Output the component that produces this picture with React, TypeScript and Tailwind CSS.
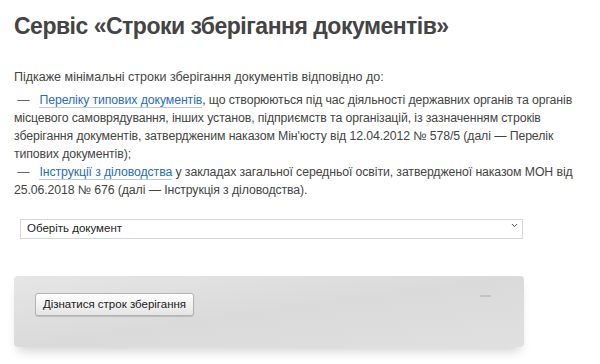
import { ChevronDown } from 'lucide-react';

export default function App() {
  const link = 'text-[#2a6db5] border-b border-[#b5cde8]';
  const dash = <span className="text-[#666]">{'\u00a0—\u00a0\u00a0 '}</span>;

  return (
    <div className="w-[600px] h-[364px] bg-white px-[14px] font-['Liberation_Sans',Arial,sans-serif] text-[#444] overflow-hidden">
      {/* Title */}
      <h1 className="pt-[11px] text-[23px] leading-[30px] font-bold text-[#444] tracking-[-0.5px]">
        Сервіс «Строки зберігання документів»
      </h1>

      <p className="mt-[27px] text-[12.5px] leading-[18px]">
        Підкаже мінімальні строки зберігання документів відповідно до:
      </p>

      <p className="mt-[5px] text-[12.3px] leading-[18px] tracking-[-0.1px] whitespace-nowrap">
        {dash}
        <a className={link}>Переліку типових документів</a>, що створюються під час діяльності державних органів та органів
        <br />
        місцевого самоврядування, інших установ, підприємств та організацій, із зазначенням строків
        <br />
        зберігання документів, затвердженим наказом Мін'юсту від 12.04.2012 № 578/5 (далі — Перелік
        <br />
        типових документів);
        <br />
        {dash}
        <a className={link}>Інструкції з діловодства</a> у закладах загальної середньої освіти, затвердженої наказом МОН від
        <br />
        25.06.2018 № 676 (далі — Інструкція з діловодства).
      </p>

      {/* Document select */}
      <div className="relative mt-[16px] ml-[6px] w-[503px] h-[20px]">
        <select className="appearance-none w-full h-full border border-[#d6d6d6] bg-white pl-[6px] text-[11.5px] text-[#222] outline-none">
          <option>Оберіть документ</option>
        </select>
        <ChevronDown className="absolute right-[4px] top-[6px] text-[#333] pointer-events-none" size={9} strokeWidth={2.5} />
      </div>

      {/* Result panel */}
      <div className="mt-[41px] w-[510px] h-[71px] rounded-[4px] bg-gradient-to-br from-[#e6e6e6] via-[#dadada] to-[#e0e0e0] shadow-[0_8px_10px_-4px_rgba(0,0,0,0.18)] flex items-start justify-between pl-[21px] pr-[33px] pt-[17px]">
        <button className="h-[23px] w-[159px] rounded-[3px] border border-[#b4b4b4] bg-gradient-to-b from-[#ffffff] to-[#e4e4e4] text-[11.5px] text-[#222] shadow-[0_1px_1px_rgba(0,0,0,0.15)]">
          Дізнатися строк зберігання
        </button>
        <div className="mt-[2px] w-[11px] h-[2px] bg-[#c4c4c4]" />
      </div>
    </div>
  );
}
